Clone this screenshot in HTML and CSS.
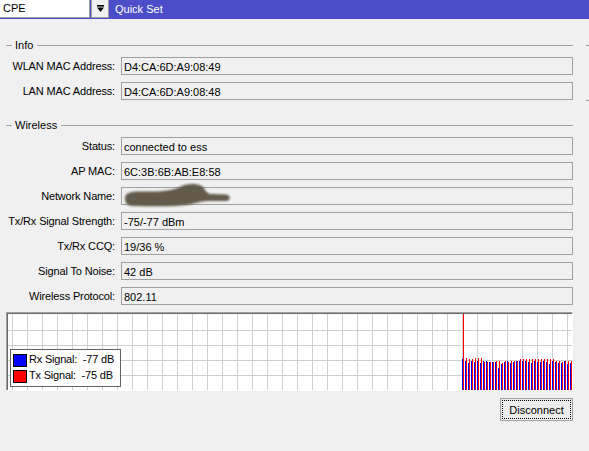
FILE: index.html
```html
<!DOCTYPE html>
<html>
<head>
<meta charset="utf-8">
<title>Quick Set</title>
<link rel="stylesheet" href="styles.css">
</head>
<body>
<div class="topbar">
  <div class="combo">CPE</div>
  <div class="dropbtn">
    <svg width="7" height="7" viewBox="0 0 7 7"><rect x="0" y="0" width="7" height="1.6" fill="#000"/><polygon points="0,2.6 7,2.6 3.5,7" fill="#000"/></svg>
  </div>
  <div class="title">Quick Set</div>
</div>
<div class="content">
  <div class="main">
    <div class="group-head"><span class="dash"></span><span class="gtitle">Info</span><span class="gline"></span></div>
    <div class="rows">
      <div class="row"><div class="label">WLAN MAC Address:</div><div class="field">D4:CA:6D:A9:08:49</div></div>
      <div class="row"><div class="label">LAN MAC Address:</div><div class="field">D4:CA:6D:A9:08:48</div></div>
    </div>
    <div class="group-head group-wireless"><span class="dash"></span><span class="gtitle">Wireless</span><span class="gline"></span></div>
    <div class="rows">
      <div class="row"><div class="label">Status:</div><div class="field">connected to ess</div></div>
      <div class="row"><div class="label">AP MAC:</div><div class="field">6C:3B:6B:AB:E8:58</div></div>
      <div class="row"><div class="label">Network Name:</div><div class="field field-redacted">
        <svg class="smudge" width="110" height="26" viewBox="0 0 110 26">
          <defs><filter id="blur" x="-20%" y="-50%" width="140%" height="200%"><feGaussianBlur stdDeviation="1"/></filter></defs>
          <g filter="url(#blur)" fill="#625a4b">
            <path d="M3 15 C3 9 10 8 25 8.5 C40 9 52 7 58 4 C64 0 78 0 82 5 C84 9 86 11 90 11 L104 11.5 C109 12 109 18 104 18 L86 18 C78 18 72 21 64 22 C50 24 30 23 12 23 C5 23 3 20 3 15 Z"/>
          </g>
        </svg>
      </div></div>
      <div class="row"><div class="label">Tx/Rx Signal Strength:</div><div class="field">-75/-77 dBm</div></div>
      <div class="row"><div class="label">Tx/Rx CCQ:</div><div class="field">19/36 %</div></div>
      <div class="row"><div class="label">Signal To Noise:</div><div class="field">42 dB</div></div>
      <div class="row"><div class="label">Wireless Protocol:</div><div class="field">802.11</div></div>
    </div>
    <div class="graph">
      <svg class="chart" width="564" height="76" viewBox="0 0 564 76" shape-rendering="crispEdges">
        <defs>
          <pattern id="vgrid" x="4" y="0" width="15" height="76" patternUnits="userSpaceOnUse">
            <rect x="0" y="0" width="1" height="76" fill="#cfcfcf"/>
          </pattern>
        </defs>
        <rect x="0" y="0" width="564" height="76" fill="#fff"/>
        <rect x="0" y="0" width="564" height="76" fill="url(#vgrid)"/>
        <rect x="0" y="16" width="564" height="1" fill="#cfcfcf"/>
        <rect x="0" y="31" width="564" height="1" fill="#cfcfcf"/>
        <rect x="0" y="46" width="564" height="1" fill="#cfcfcf"/>
        <rect x="0" y="61" width="564" height="1" fill="#cfcfcf"/>
        <g fill="#0000ff">
          <rect x="454" y="45" width="1" height="31"/>
          <rect x="457" y="47" width="1" height="29"/>
          <rect x="460" y="49" width="1" height="27"/>
          <rect x="463" y="47" width="1" height="29"/>
          <rect x="466" y="48" width="1" height="28"/>
          <rect x="469" y="47" width="1" height="29"/>
          <rect x="472" y="49" width="1" height="27"/>
          <rect x="475" y="47" width="1" height="29"/>
          <rect x="478" y="47" width="1" height="29"/>
          <rect x="481" y="48" width="1" height="28"/>
          <rect x="484" y="48" width="1" height="28"/>
          <rect x="487" y="48" width="1" height="28"/>
          <rect x="490" y="54" width="1" height="22"/>
          <rect x="493" y="50" width="1" height="26"/>
          <rect x="496" y="48" width="1" height="28"/>
          <rect x="499" y="47" width="1" height="29"/>
          <rect x="502" y="49" width="1" height="27"/>
          <rect x="505" y="48" width="1" height="28"/>
          <rect x="508" y="47" width="1" height="29"/>
          <rect x="511" y="47" width="1" height="29"/>
          <rect x="514" y="47" width="1" height="29"/>
          <rect x="517" y="47" width="1" height="29"/>
          <rect x="520" y="48" width="1" height="28"/>
          <rect x="523" y="49" width="1" height="27"/>
          <rect x="526" y="47" width="1" height="29"/>
          <rect x="529" y="48" width="1" height="28"/>
          <rect x="532" y="48" width="1" height="28"/>
          <rect x="535" y="47" width="1" height="29"/>
          <rect x="538" y="48" width="1" height="28"/>
          <rect x="541" y="50" width="1" height="26"/>
          <rect x="544" y="47" width="1" height="29"/>
          <rect x="547" y="48" width="1" height="28"/>
          <rect x="550" y="49" width="1" height="27"/>
          <rect x="553" y="49" width="1" height="27"/>
          <rect x="556" y="47" width="1" height="29"/>
          <rect x="559" y="50" width="1" height="26"/>
          <rect x="562" y="49" width="1" height="27"/>
        </g>
        <g fill="#ff0000">
          <rect x="455" y="0" width="1" height="76"/>
          <rect x="458" y="44" width="1" height="32"/>
          <rect x="461" y="45" width="1" height="31"/>
          <rect x="464" y="45" width="1" height="31"/>
          <rect x="467" y="44" width="1" height="32"/>
          <rect x="470" y="44" width="1" height="32"/>
          <rect x="473" y="44" width="1" height="32"/>
          <rect x="476" y="48" width="1" height="28"/>
          <rect x="479" y="48" width="1" height="28"/>
          <rect x="482" y="48" width="1" height="28"/>
          <rect x="485" y="48" width="1" height="28"/>
          <rect x="488" y="47" width="1" height="29"/>
          <rect x="491" y="47" width="1" height="29"/>
          <rect x="494" y="49" width="1" height="27"/>
          <rect x="497" y="47" width="1" height="29"/>
          <rect x="500" y="48" width="1" height="28"/>
          <rect x="503" y="47" width="1" height="29"/>
          <rect x="506" y="47" width="1" height="29"/>
          <rect x="509" y="47" width="1" height="29"/>
          <rect x="512" y="45" width="1" height="31"/>
          <rect x="515" y="45" width="1" height="31"/>
          <rect x="518" y="45" width="1" height="31"/>
          <rect x="521" y="45" width="1" height="31"/>
          <rect x="524" y="45" width="1" height="31"/>
          <rect x="527" y="45" width="1" height="31"/>
          <rect x="530" y="45" width="1" height="31"/>
          <rect x="533" y="45" width="1" height="31"/>
          <rect x="536" y="45" width="1" height="31"/>
          <rect x="539" y="45" width="1" height="31"/>
          <rect x="542" y="45" width="1" height="31"/>
          <rect x="545" y="45" width="1" height="31"/>
          <rect x="548" y="47" width="1" height="29"/>
          <rect x="551" y="47" width="1" height="29"/>
          <rect x="554" y="48" width="1" height="28"/>
          <rect x="557" y="47" width="1" height="29"/>
          <rect x="560" y="47" width="1" height="29"/>
          <rect x="563" y="47" width="1" height="29"/>
        </g>
      </svg>
      <div class="legend">
        <div class="legend-row"><span class="swatch swatch-rx"></span><span class="legend-text">Rx Signal:&nbsp; -77 dB</span></div>
        <div class="legend-row"><span class="swatch swatch-tx"></span><span class="legend-text">Tx Signal:&nbsp; -75 dB</span></div>
      </div>
    </div>
    <div class="actions"><button class="btn">Disconnect</button></div>
  </div>
  <div class="side-stub"></div>
</div>
</body>
</html>
```
FILE: styles.css
```css
* { box-sizing: border-box; }

html, body {
  margin: 0;
  padding: 0;
}

body {
  width: 589px;
  height: 451px;
  overflow: hidden;
  background: #f0f0f0;
  font-family: "Liberation Sans", Arial, sans-serif;
  font-size: 11px;
  color: #000;
}

/* top bar */
.topbar {
  height: 19px;
  background: #4b4ec8;
  display: flex;
  align-items: flex-start;
}

.combo {
  width: 90px;
  height: 18px;
  background: #fff;
  border-right: 1px solid #a0a0a0;
  border-bottom: 1px solid #a0a0a0;
  padding-left: 3px;
  line-height: 17px;
}

.dropbtn {
  width: 18px;
  height: 18px;
  margin-left: 1px;
  background: #f0f0f0;
  border: 1px solid #a0a0a0;
  border-top: none;
  display: flex;
  justify-content: center;
  align-items: center;
}

.dropbtn svg { display: block; margin-top: -1px; }

.title {
  color: #fff;
  margin-left: 6px;
  line-height: 18px;
}

/* content */
.content {
  display: flex;
  padding-left: 6px;
}

.main {
  width: 567px;
  display: flex;
  flex-direction: column;
}

.side-stub {
  margin-left: 13px;
  margin-top: 26px;
  width: 3px;
  height: 56px;
  border-top: 1px solid #a0a0a0;
  border-bottom: 1px solid #a0a0a0;
}

.group-head {
  margin-top: 19px;
  height: 14px;
  display: flex;
  align-items: center;
}

.group-wireless { margin-top: 18px; }

.dash {
  width: 6px;
  height: 1px;
  background: #a0a0a0;
}

.gtitle {
  margin-left: 3px;
  line-height: 14px;
}

.gline {
  flex: 1;
  height: 1px;
  margin-left: 4px;
  background: #a0a0a0;
}

.rows {
  display: flex;
  flex-direction: column;
  gap: 7px;
  margin-top: 5px;
}

.row {
  display: flex;
  height: 18px;
}

.label {
  width: 109px;
  text-align: right;
  white-space: nowrap;
  letter-spacing: -0.15px;
  line-height: 16px;
  padding-top: 1px;
}

.field {
  margin-left: 6px;
  width: 452px;
  height: 18px;
  border: 1px solid #a0a0a0;
  padding: 1px 0 0 2px;
  line-height: 16px;
  white-space: nowrap;
}

.field-redacted { position: relative; }

.smudge {
  position: absolute;
  left: 0;
  top: -5px;
  overflow: visible;
}

/* graph */
.graph {
  position: relative;
  margin-top: 7px;
  height: 79px;
  border: 1px solid;
  border-color: #a0a0a0 #ffffff #ffffff #a0a0a0;
  box-shadow: inset 1px 1px 0 #696969;
  padding: 1px 0 0 1px;
  background: #fff;
}

.chart { display: block; }

.legend {
  position: absolute;
  left: 3px;
  top: 36px;
  width: 111px;
  height: 38px;
  background: #fff;
  border: 1px solid #646464;
  padding: 4px 0 0 2px;
  display: flex;
  flex-direction: column;
  gap: 3px;
}

.legend-row {
  display: flex;
  align-items: flex-start;
  height: 13px;
}

.swatch {
  width: 14px;
  height: 13px;
  border: 1px solid #000;
}

.swatch-rx { background: #0000ff; }
.swatch-tx { background: #ff0000; }

.legend-text {
  margin-left: 2px;
  line-height: 11px;
  white-space: nowrap;
  letter-spacing: -0.2px;
}

.actions {
  display: flex;
  justify-content: flex-end;
  margin-top: 7px;
}

.btn {
  width: 73px;
  height: 23px;
  margin: 0;
  padding: 0;
  border: 1px solid #a0a0a0;
  background: #ececec;
  font-family: "Liberation Sans", Arial, sans-serif;
  font-size: 11px;
  color: #000;
  outline: 1px dotted #000;
  outline-offset: -3px;
}
```
